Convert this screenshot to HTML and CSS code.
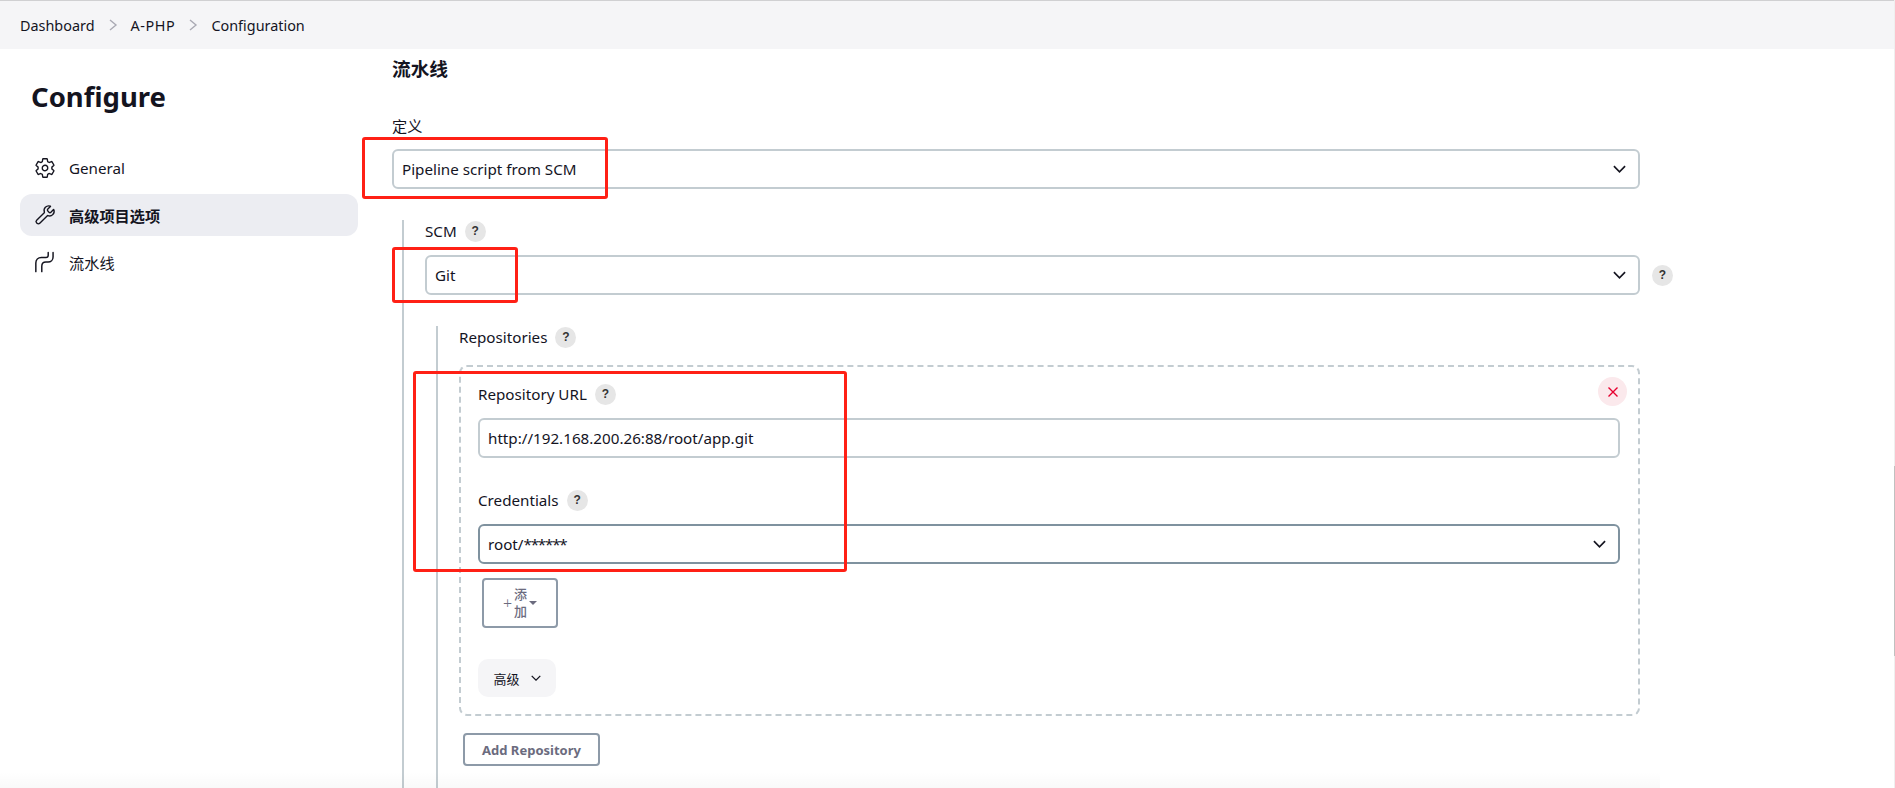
FILE: index.html
```html
<!DOCTYPE html>
<html>
<head>
  <title>A-PHP Configuration</title>
  <link rel="stylesheet" href="styles.css">
</head>
<body>
  <div class="breadcrumbs">
    <a>Dashboard</a>
    <svg class="crumb-sep" viewBox="0 0 10 14"><path d="M2 2l6 5-6 5"/></svg>
    <a class="crumb-short">A-PHP</a>
    <svg class="crumb-sep" viewBox="0 0 10 14"><path d="M2 2l6 5-6 5"/></svg>
    <a>Configuration</a>
  </div>

  <div class="page">
    <div class="sidebar">
      <h1>Configure</h1>
      <div class="nav-item">
        <svg class="nav-icon" viewBox="0 0 512 512"><path d="M262.29 192.31a64 64 0 1057.4 57.4 64.13 64.13 0 00-57.4-57.4zM416.39 256a154.34 154.34 0 01-1.53 20.79l45.21 35.46a10.81 10.81 0 012.45 13.75l-42.77 74a10.81 10.81 0 01-13.14 4.59l-44.9-18.08a16.11 16.11 0 00-15.17 1.75A164.48 164.48 0 01325 400.8a15.94 15.94 0 00-8.82 12.14l-6.73 47.89a11.08 11.08 0 01-10.68 9.17h-85.54a11.11 11.11 0 01-10.69-8.87l-6.72-47.82a16.07 16.07 0 00-9-12.22 155.3 155.3 0 01-21.46-12.57 16 16 0 00-15.11-1.71l-44.89 18.07a10.81 10.81 0 01-13.14-4.58l-42.77-74a10.8 10.8 0 012.45-13.75l38.21-30a16.05 16.05 0 006-14.08c-.36-4.17-.58-8.33-.58-12.5s.21-8.27.58-12.35a16 16 0 00-6.07-13.94l-38.19-30A10.81 10.81 0 0149.48 186l42.77-74a10.81 10.81 0 0113.14-4.59l44.9 18.08a16.11 16.11 0 0015.17-1.75A164.48 164.48 0 01187 111.2a15.94 15.94 0 008.82-12.14l6.73-47.89A11.08 11.08 0 01213.23 42h85.54a11.11 11.11 0 0110.69 8.87l6.72 47.82a16.07 16.07 0 009 12.22 155.3 155.3 0 0121.46 12.57 16 16 0 0015.11 1.71l44.89-18.07a10.81 10.81 0 0113.14 4.58l42.77 74a10.8 10.8 0 01-2.45 13.75l-38.21 30a16.05 16.05 0 00-6.05 14.08c.33 4.14.55 8.3.55 12.47z"/></svg>
        <span>General</span>
      </div>
      <div class="nav-item active">
        <svg class="nav-icon" viewBox="0 0 512 512"><path d="M393.87 190a32.1 32.1 0 01-45.25 0l-26.57-26.57a32.09 32.09 0 010-45.26L382 58.07c3-3 2-6.5-1-7.6-39-14-85-5-116 26-29 29-37 73-23 110 2 6 1 11-3 15L62 378c-17 17-17 45 0 62l10 10c17 17 45 17 62 0l177-177c4-4 9-5 15-3 37 14 81 6 110-23 31-31 40-77 26-116-1-3-5-4-7.6-1z"/></svg>
        <span>高级项目选项</span>
      </div>
      <div class="nav-item">
        <svg class="nav-icon pipe-icon" viewBox="0 0 24 24"><path d="M15.500 1.500v3c0 1.500-1 2.500-2.500 2.500H8c-3.500 0-6 2.500-6 6v9.500"/><path d="M20.800 1.500v5c0 3.500-2.500 5.500-5.500 5.500H13c-3 0-4.500 2-4.500 4.500v6"/></svg>
        <span>流水线</span>
      </div>
    </div>

    <div class="main">
      <div class="section-title">流水线</div>

      <div class="field-label">定义</div>
      <div class="select">Pipeline script from SCM<svg class="chev" viewBox="0 0 14 8"><path d="M1 1l6 6 6-6"/></svg></div>

      <div class="nested scm-block">
        <div class="field-label with-help">SCM <span class="help">?</span></div>
        <div class="select-row">
          <div class="select">Git<svg class="chev" viewBox="0 0 14 8"><path d="M1 1l6 6 6-6"/></svg></div>
          <span class="help">?</span>
        </div>

        <div class="nested repo-block">
          <div class="field-label with-help">Repositories <span class="help">?</span></div>

          <div class="repo-card">
            <span class="close-btn"><svg viewBox="0 0 12 12"><path d="M1.500 1.500l9 9M10.500 1.500l-9 9"/></svg></span>
            <div class="field-label with-help">Repository URL <span class="help">?</span></div>
            <div class="input">http://192.168.200.26:88/root/app.git</div>

            <div class="field-label with-help cred-label">Credentials <span class="help">?</span></div>
            <div class="select dark"><span>root/<span class="stars">******</span></span><svg class="chev" viewBox="0 0 14 8"><path d="M1 1l6 6 6-6"/></svg></div>

            <div class="add-btn">
              <span class="plus">+</span>
              <span class="add-text">添<br>加</span>
              <span class="caret"></span>
            </div>

            <div class="advanced">高级<svg class="chev small" viewBox="0 0 14 8"><path d="M1 1l6 6 6-6"/></svg></div>
          </div>

          <div class="add-repo">Add Repository</div>
        </div>
      </div>
    </div>
  </div>

  <div class="bottom-fade"></div>
  <div class="scroll-track"><div class="scroll-thumb"></div></div>

  <!-- red marks drawn over the shot -->
  <div class="mark mark-def"></div>
  <div class="mark mark-git"></div>
  <div class="mark mark-repo"></div>
</body>
</html>
```

FILE: styles.css
```css
html, body {
  margin: 0;
  height: 788px;
  overflow: hidden;
  background: #fff;
}
body {
  font-family: "Noto Sans", "Noto Sans CJK SC", sans-serif;
  font-size: 15.2px;
  color: #14141f;
}
.breadcrumbs {
  height: 48px;
  background: #f5f5f7;
  border-top: 1px solid #d0d0d2;
  padding-left: 20px;
  display: flex;
  align-items: center;
  gap: 13px;
  font-size: 14.4px;
}
.crumb-short {
  letter-spacing: 0.6px;
}
.crumb-sep {
  width: 10px;
  height: 14px;
  fill: none;
  stroke: #aaaab4;
  stroke-width: 1.4;
}
.page {
  display: flex;
}
.sidebar {
  width: 338px;
  margin-left: 20px;
  flex: none;
}
.sidebar h1 {
  margin: 29px 0 31px 11px;
  font-size: 27.500px;
  line-height: 38px;
  font-weight: 700;
}
.nav-item {
  height: 42px;
  margin-bottom: 5px;
  border-radius: 12px;
  display: flex;
  align-items: center;
  gap: 13px;
  padding-left: 14px;
}
.nav-item.active {
  background: #ecedf2;
  font-weight: 700;
}
.nav-icon {
  width: 22px;
  height: 22px;
  fill: none;
  stroke: #14141f;
  stroke-width: 32;
  stroke-linecap: round;
  stroke-linejoin: round;
}
.nav-icon.pipe-icon {
  stroke-width: 1.6;
}
.main {
  margin-left: 34px;
  width: 1248px;
  flex: none;
}
.section-title {
  margin-top: 7px;
  font-size: 18.700px;
  font-weight: 700;
  line-height: 26px;
}
.field-label {
  line-height: 22px;
  margin-bottom: 13px;
}
.main > .field-label {
  margin-top: 33px;
  margin-bottom: 12px;
}
.with-help {
  display: flex;
  align-items: center;
  gap: 8px;
}
.help {
  width: 21px;
  height: 21px;
  border-radius: 50%;
  background: #e6e6e6;
  color: #333;
  font-family: "Liberation Sans", sans-serif;
  font-size: 12px;
  font-weight: 700;
  display: inline-flex;
  align-items: center;
  justify-content: center;
  flex: none;
}
.select, .input {
  height: 40px;
  box-sizing: border-box;
  border: 2px solid #c3ccd1;
  border-radius: 6px;
  padding: 0 12px 0 8px;
  display: flex;
  align-items: center;
  justify-content: space-between;
}
.select.dark {
  border-color: #7f929f;
}
.stars {
  letter-spacing: -1.2px;
}
.chev {
  width: 13px;
  height: 8px;
  fill: none;
  stroke: #14141f;
  stroke-width: 1.8;
}
.nested {
  border-left: 2px solid #c3ccd1;
}
.scm-block {
  margin: 31px 0 0 10px;
  padding: 0 0 0 21px;
}
.select-row {
  display: flex;
  align-items: center;
  gap: 12px;
}
.select-row .select {
  width: 1215px;
  flex: none;
}
.repo-block {
  margin: 31px 0 0 11px;
  padding: 0 0 0 21px;
  height: 500px;
}
.repo-block > .field-label {
  margin-bottom: 17px;
}
.repo-card {
  position: relative;
  width: 1181px;
  height: 351px;
  box-sizing: border-box;
  border: 2px dashed #c3ccd1;
  border-radius: 8px;
  padding: 16px 18px 0 17px;
}
.close-btn {
  position: absolute;
  top: 10px;
  right: 11px;
  width: 29px;
  height: 29px;
  border-radius: 50%;
  background: #fbe9ec;
  display: flex;
  align-items: center;
  justify-content: center;
}
.close-btn svg {
  width: 12px;
  height: 12px;
  fill: none;
  stroke: #e6002e;
  stroke-width: 1.4;
}
.cred-label {
  margin-top: 31px;
}
.add-btn {
  width: 76px;
  height: 50px;
  box-sizing: border-box;
  margin: 14px 0 31px 4px;
  border: 2px solid #8d9aa8;
  border-radius: 4px;
  color: #6b6b7e;
  display: flex;
  align-items: center;
  justify-content: center;
  gap: 2px;
}
.add-text {
  font-size: 13px;
  line-height: 17px;
  font-weight: 500;
}
.plus {
  font-weight: 300;
  font-size: 16px;
}
.caret {
  border-left: 4px solid transparent;
  border-right: 4px solid transparent;
  border-top: 4px solid #6b6b7e;
}
.advanced {
  width: 78px;
  height: 38px;
  background: #f5f5f7;
  border-radius: 10px;
  font-size: 13px;
  display: flex;
  align-items: center;
  justify-content: center;
  gap: 11px;
}
.chev.small {
  width: 10px;
  height: 6px;
}
.add-repo {
  margin: 17px 0 0 4px;
  width: 137px;
  height: 33px;
  box-sizing: border-box;
  border: 2px solid #8d9aa8;
  border-radius: 4px;
  color: #6b6b7e;
  font-size: 13px;
  font-weight: 700;
  display: flex;
  align-items: center;
  justify-content: center;
}
.bottom-fade {
  position: absolute;
  left: 0;
  bottom: 0;
  width: 1660px;
  height: 16px;
  background: linear-gradient(rgba(0, 0, 0, 0), rgba(0, 0, 0, 0.025));
}
.scroll-track {
  position: absolute;
  top: 0;
  right: 0;
  width: 1px;
  height: 100%;
  background: #efefef;
}
.scroll-thumb {
  position: absolute;
  top: 466px;
  width: 1px;
  height: 190px;
  background: #c0c0c0;
}
.mark {
  position: absolute;
  box-sizing: border-box;
  border: 3px solid #ff2015;
  border-radius: 3px;
}
.mark-def {
  left: 362px;
  top: 137px;
  width: 246px;
  height: 62px;
}
.mark-git {
  left: 392px;
  top: 247px;
  width: 126px;
  height: 56px;
}
.mark-repo {
  left: 413px;
  top: 371px;
  width: 434px;
  height: 201px;
}
```
